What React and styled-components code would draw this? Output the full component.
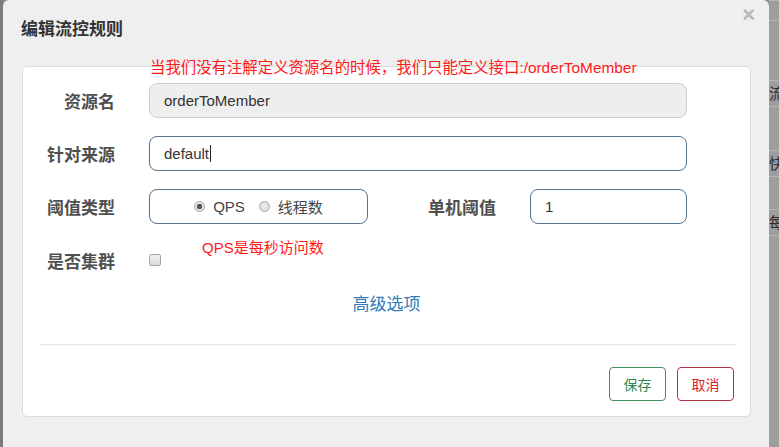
import React from 'react';
import styled, { createGlobalStyle } from 'styled-components';

const GlobalStyle = createGlobalStyle`
    html, body {
        margin: 0;
        padding: 0;
        overflow: hidden;
    }
    body {
        font-family: "Liberation Sans", "Noto Sans CJK SC", sans-serif;
    }
`;

const Page = styled.div`
    width: 779px;
    height: 447px;
    display: flex;
    background-color: #8d8d8d;
    overflow: hidden;
`;

const LeftEdge = styled.div`
    width: 3px;
    flex-shrink: 0;
    background-color: #7c7c7c;
`;

const RightEdge = styled.div`
    width: 10px;
    flex-shrink: 0;
    overflow: hidden;
    background-color: #9d9d9d;
    display: flex;
    flex-direction: column;
`;

const EdgeCell = styled.div`
    height: ${(p) => p.$h}px;
    flex-shrink: 0;
    box-sizing: border-box;
    border-top: 1px solid #b4b4b4;
    font-size: 15px;
    color: #2a2a2a;
    line-height: ${(p) => p.$h}px;
    white-space: nowrap;
`;

const Modal = styled.div`
    width: 766px;
    flex-shrink: 0;
    height: 470px;
    background-color: #efefef;
    border-radius: 6px;
    display: flex;
    flex-direction: column;
`;

const Header = styled.div`
    height: 66px;
    display: flex;
    justify-content: space-between;
    align-items: flex-start;
    padding: 0 14px 0 18px;
    box-sizing: border-box;
`;

const Title = styled.h4`
    margin: 20px 0 0;
    font-size: 17px;
    line-height: 20px;
    font-weight: bold;
    color: #333;
`;

const Close = styled.span`
    margin-top: 4px;
    font-size: 22px;
    line-height: 22px;
    font-weight: bold;
    color: #b8b8b8;
    cursor: pointer;
`;

const Card = styled.div`
    position: relative;
    margin: 0 18px 0 19px;
    background-color: #fff;
    border: 1px solid #dcdcdc;
    border-radius: 5px;
    padding: 16px 16px 15px 0;
`;

const Note = styled.span`
    position: absolute;
    left: ${(p) => p.$left}px;
    top: ${(p) => p.$top}px;
    color: #ff1a1a;
    font-size: ${(p) => p.$size || 15}px;
    line-height: 17px;
    white-space: nowrap;
`;

const Row = styled.div`
    display: flex;
    align-items: center;
    height: ${(p) => p.$height || 35}px;
    margin-bottom: ${(p) => p.$gap ?? 18}px;
`;

const Label = styled.label`
    width: ${(p) => p.$width || 92}px;
    margin-right: 34px;
    text-align: right;
    font-size: 17px;
    font-weight: bold;
    color: #4f4f4f;
    flex-shrink: 0;
`;

const Field = styled.div`
    width: ${(p) => p.$width}px;
    height: 35px;
    box-sizing: border-box;
    border: 1px solid ${(p) => (p.$disabled ? '#cfcfcf' : '#55728f')};
    background-color: ${(p) => (p.$disabled ? '#eeeeee' : '#fff')};
    border-radius: 8px;
    padding: 0 14px;
    display: flex;
    align-items: center;
    font-size: 15px;
    color: #333;
`;

const Caret = styled.span`
    display: inline-block;
    width: 1px;
    height: 17px;
    background-color: #222;
    margin-left: 1px;
`;

const RadioGroup = styled.div`
    width: 219px;
    height: 35px;
    box-sizing: border-box;
    border: 1px solid #55728f;
    border-radius: 8px;
    display: flex;
    align-items: center;
    justify-content: center;
    gap: 14px;
    margin-right: 58px;
`;

const RadioOption = styled.span`
    display: flex;
    align-items: center;
    gap: 8px;
    font-size: 15px;
    color: #444;
`;

const RadioDot = styled.span`
    width: 11px;
    height: 11px;
    box-sizing: border-box;
    border-radius: 50%;
    border: 1px solid #a8a8a8;
    background: radial-gradient(circle, ${(p) => (p.$checked ? '#555 0 2.5px, #e4e4e4 3px' : '#ececec 0, #d8d8d8 100%')});
`;

const Checkbox = styled.span`
    width: 12px;
    height: 12px;
    box-sizing: border-box;
    border: 1px solid #a6a6a6;
    border-radius: 2px;
    background: linear-gradient(#f0f0f0, #dcdcdc);
`;

const AdvancedLink = styled.a`
    display: block;
    margin: 19px 0 0 16px;
    text-align: center;
    font-size: 17px;
    line-height: 20px;
    color: #337ab7;
    cursor: pointer;
`;

const Divider = styled.div`
    margin: 29px -2px 0 17px;
    border-top: 1px solid #e5e5e5;
    border-bottom: 1px solid #f6f6f6;
`;

const Footer = styled.div`
    display: flex;
    justify-content: flex-end;
    gap: 11px;
    margin-top: 21px;
`;

const Button = styled.button`
    width: 57px;
    height: 34px;
    background-color: #fff;
    border: 1px solid ${(p) => (p.$danger ? '#b83447' : '#3f9160')};
    color: ${(p) => (p.$danger ? '#d91e2e' : '#2b8a4c')};
    border-radius: 4px;
    font-family: inherit;
    font-size: 14px;
    padding: 0;
    cursor: pointer;
`;

const App = () => {
    return (
        <Page>
            <GlobalStyle />
            <LeftEdge />
            <Modal>
                <Header>
                    <Title>编辑流控规则</Title>
                    <Close>×</Close>
                </Header>
                <Card>
                    <Note $left={127} $top={-8} $size={15.4}>当我们没有注解定义资源名的时候，我们只能定义接口:/orderToMember</Note>
                    <Row>
                        <Label>资源名</Label>
                        <Field $width={538} $disabled>orderToMember</Field>
                    </Row>
                    <Row>
                        <Label>针对来源</Label>
                        <Field $width={538}>default<Caret /></Field>
                    </Row>
                    <Row $gap={20}>
                        <Label>阈值类型</Label>
                        <RadioGroup>
                            <RadioOption><RadioDot $checked />QPS</RadioOption>
                            <RadioOption><RadioDot />线程数</RadioOption>
                        </RadioGroup>
                        <Label $width={70}>单机阈值</Label>
                        <Field $width={157}>1</Field>
                    </Row>
                    <Note $left={179} $top={172}>QPS是每秒访问数</Note>
                    <Row $height={32} $gap={0}>
                        <Label>是否集群</Label>
                        <Checkbox />
                    </Row>
                    <AdvancedLink>高级选项</AdvancedLink>
                    <Divider />
                    <Footer>
                        <Button>保存</Button>
                        <Button $danger>取消</Button>
                    </Footer>
                </Card>
            </Modal>
            <RightEdge>
                <EdgeCell $h={20} />
                <EdgeCell $h={60} />
                <EdgeCell $h={26}>流</EdgeCell>
                <EdgeCell $h={44} />
                <EdgeCell $h={26}>快</EdgeCell>
                <EdgeCell $h={33} />
                <EdgeCell $h={26}>每</EdgeCell>
                <EdgeCell $h={212} />
            </RightEdge>
        </Page>
    );
};

export default App;
